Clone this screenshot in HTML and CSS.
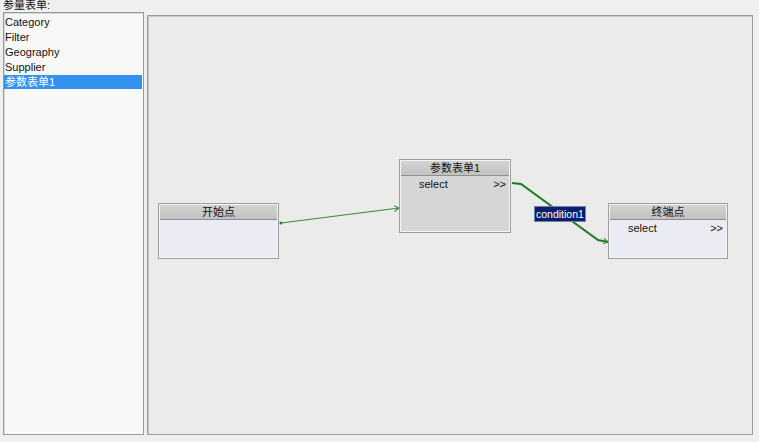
FILE: index.html
```html
<!DOCTYPE html>
<html lang="zh-CN">
<head>
  <meta charset="UTF-8" />
  <title>参量表单</title>
  <link rel="stylesheet" href="styles.css">
</head>
<body>
  <div class="app">
    <div class="caption">参量表单:</div>
    <div class="main">
      <ul class="form-list">
        <li>Category</li>
        <li>Filter</li>
        <li>Geography</li>
        <li>Supplier</li>
        <li class="selected">参数表单1</li>
      </ul>

      <div class="canvas">
        <svg class="edges" width="604" height="420">
          <defs>
            <marker id="arrow" markerWidth="6" markerHeight="7" refX="5" refY="3.5" orient="auto" markerUnits="userSpaceOnUse">
              <path d="M0,0.5 L5,3.5 L0,6.5" fill="none" stroke="#2e7d32" stroke-width="1" />
            </marker>
          </defs>
          <circle cx="133" cy="207" r="1.5" fill="#2e7d32" />
          <line x1="133" y1="207" x2="251" y2="192" stroke="#3a8a3e" stroke-width="1.2" marker-end="url(#arrow)" />
          <polyline points="364,167 373,168 450,224 460,226" fill="none" stroke="#1f7a24" stroke-width="2" marker-end="url(#arrow)" />
        </svg>

        <div class="node node-start">
          <div class="node-head">开始点</div>
          <div class="node-body"></div>
        </div>

        <div class="node node-form">
          <div class="node-head">参数表单1</div>
          <div class="node-body">
            <div class="port"><span>select</span><span>&gt;&gt;</span></div>
          </div>
        </div>

        <div class="node node-end">
          <div class="node-head">终端点</div>
          <div class="node-body">
            <div class="port"><span>select</span><span>&gt;&gt;</span></div>
          </div>
        </div>

        <div class="edge-label">condition1</div>
      </div>
    </div>
  </div>
</body>
</html>
```

FILE: styles.css
```css
body {
  margin: 0;
  background-color: #efefed;
  font-family: "Liberation Sans", "Noto Sans CJK SC", sans-serif;
  font-size: 11px;
  color: #111;
}

.app {
  display: flex;
  flex-direction: column;
  height: 442px;
  padding: 0 6px 7px 3px;
  box-sizing: border-box;
}

.caption {
  height: 12px;
  line-height: 11px;
}

.main {
  flex: 1;
  display: flex;
  gap: 3px;
}

.form-list {
  width: 141px;
  margin: 0;
  padding: 2px 1px 2px 0;
  list-style: none;
  background-color: #f8f8f6;
  border: 1px solid #9a9a9a;
  box-shadow: inset 1px 1px 0 #d8d8d8;
  box-sizing: border-box;
}

.form-list li {
  height: 15px;
  line-height: 15px;
  padding-left: 1px;
}

.form-list li.selected {
  background-color: #3392f0;
  color: #fff;
  height: 14px;
  line-height: 14px;
}

.canvas {
  flex: 1;
  position: relative;
  margin-top: 3px;
  background-color: #ebebe9;
  border: 1px solid #9c9c9c;
  box-shadow: inset 1px 1px 0 #c8c8c8;
}

.edges {
  position: absolute;
  top: 0;
  left: 0;
}

.node {
  position: absolute;
  display: flex;
  flex-direction: column;
  border: 1px solid #9d9d9d;
  box-shadow: inset 0 0 0 1px #f4f4f4;
  box-sizing: border-box;
  background-color: #ebebf3;
}

.node-head {
  height: 14px;
  line-height: 14px;
  margin: 1px 1px 0;
  text-align: center;
  background: linear-gradient(#d2d2d2, #c2c2c2);
  border-bottom: 1px solid #8f8f8f;
}

.node-body {
  flex: 1;
  margin: 0 1px 1px;
}

.port {
  display: flex;
  justify-content: space-between;
  padding: 2px 3px 0 18px;
  line-height: 12px;
}

.node-start {
  left: 10px;
  top: 187px;
  width: 121px;
  height: 56px;
}

.node-form {
  left: 251px;
  top: 143px;
  width: 112px;
  height: 74px;
  background-color: #d6d6d5;
}

.node-end {
  left: 460px;
  top: 187px;
  width: 120px;
  height: 56px;
}

.edge-label {
  position: absolute;
  left: 386px;
  top: 190px;
  padding: 0 1px;
  height: 14px;
  line-height: 14px;
  font-size: 10.5px;
  background-color: #0a1f6e;
  color: #fff;
  border: 1px solid #6f7fb0;
}
```
